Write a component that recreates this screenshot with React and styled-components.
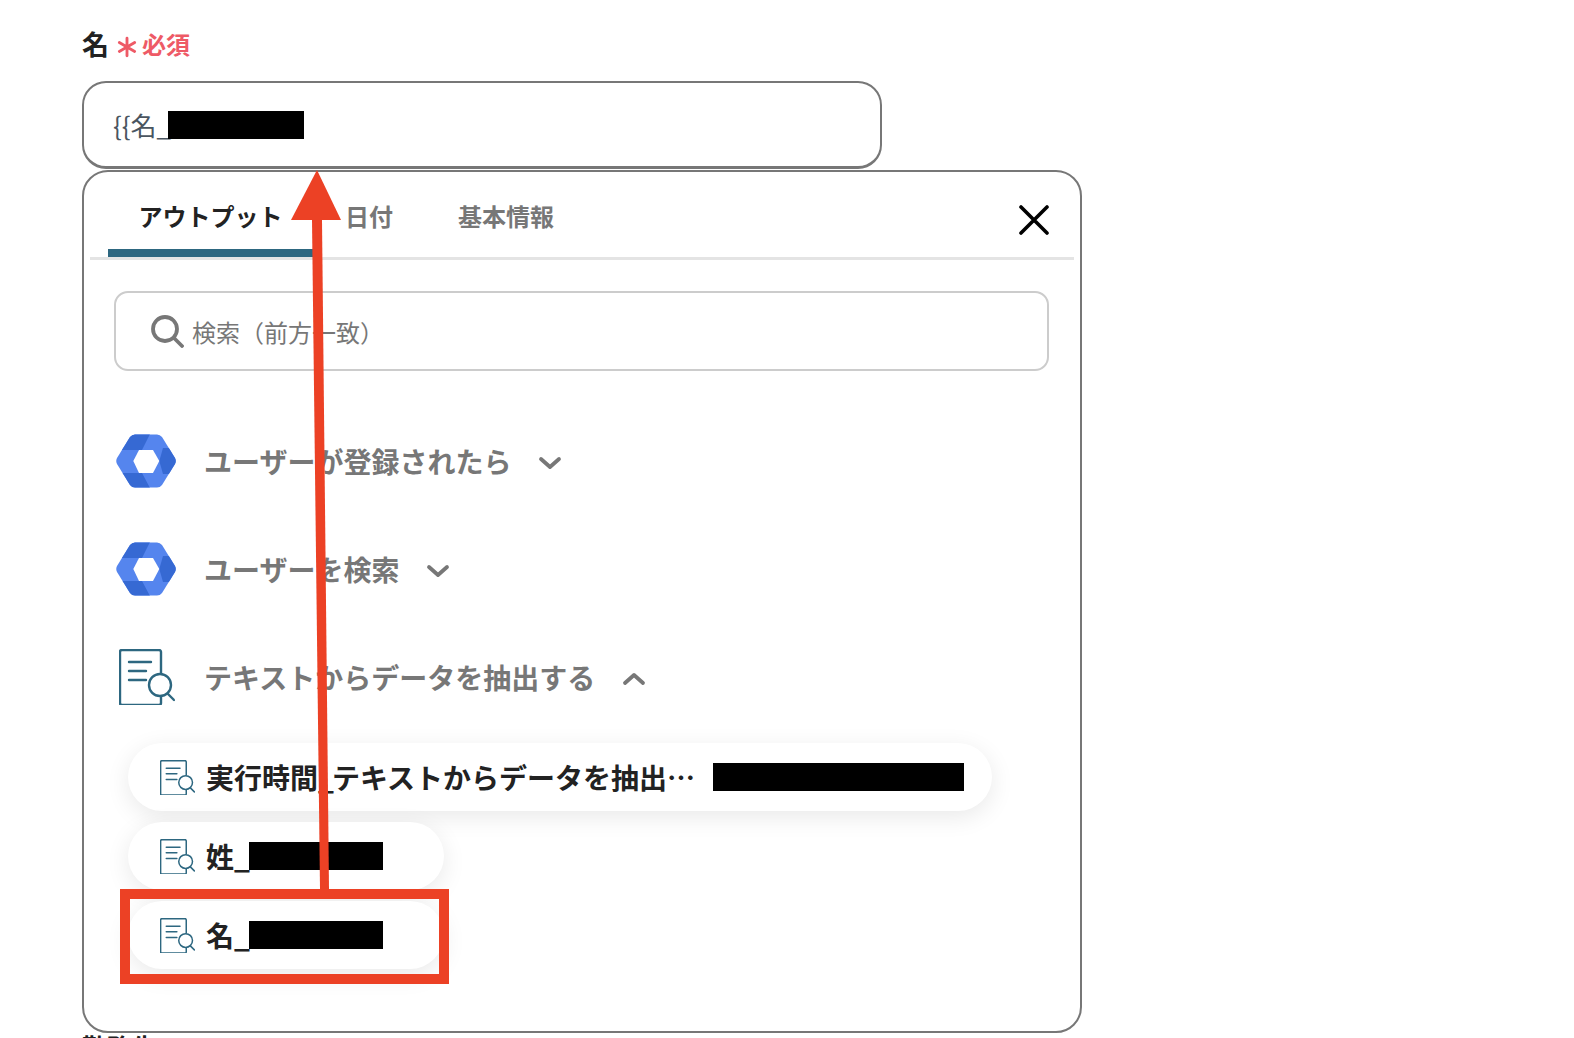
import React from 'react'
import styled, { createGlobalStyle } from 'styled-components'

const colors = {
  ink: '#222222',
  gray: '#777777',
  teal: '#2d6780',
  red: '#ec4125',
  blue: '#5585ee',
  blueDark: '#3669d3',
}

const GlobalStyle = createGlobalStyle`
  html, body {
    margin: 0;
    height: 100%;
    overflow: hidden;
    background: #fff;
  }
  body {
    font-family: "Noto Sans CJK JP", "Noto Sans", sans-serif;
    color: ${colors.ink};
  }
`

const Page = styled.div`
  position: relative;
  width: 1574px;
  height: 1038px;
  padding: 25px 0 0 82px;
  box-sizing: border-box;
  overflow: hidden;
`

const FieldLabel = styled.div`
  display: flex;
  align-items: center;
  height: 38px;
  font-size: 27px;
  font-weight: 700;
  line-height: 38px;
`

const Required = styled.span`
  margin-left: 8px;
  color: #ee5a66;
  font-size: 24px;
  font-weight: 700;
  display: flex;
  align-items: center;
  gap: 5px;
`

const Star = styled.svg`
  width: 20px;
  height: 22px;
  margin-top: 6px;
`

const Input = styled.div`
  width: 800px;
  height: 88px;
  margin-top: 18px;
  padding-left: 29px;
  box-sizing: border-box;
  display: flex;
  align-items: center;
  border: 2px solid ${colors.gray};
  border-bottom-width: 3px;
  border-radius: 24px;
  font-size: 26px;
  color: #4a5560;
`

const Redact = styled.span`
  display: inline-block;
  flex: none;
  width: ${p => p.$w}px;
  height: 28px;
  margin-left: ${p => p.$shift || 0}px;
  background: #000;
`

const Panel = styled.div`
  width: 1000px;
  height: 863px;
  margin-top: 1px;
  box-sizing: border-box;
  padding: 0 6px;
  border: 2px solid ${colors.gray};
  border-radius: 26px;
  background: #fff;
`

const TabBar = styled.div`
  position: relative;
  display: flex;
  height: 88px;
  box-sizing: border-box;
  padding-left: 18px;
  border-bottom: 3px solid #e4e4e4;
`

const Tab = styled.div`
  width: ${p => p.$w}px;
  height: 85px;
  box-sizing: border-box;
  padding-top: 27px;
  text-align: center;
  font-size: 24px;
  line-height: 34px;
  font-weight: 700;
  color: ${p => (p.$active ? colors.ink : colors.gray)};
  border-bottom: ${p => (p.$active ? `8px solid ${colors.teal}` : 'none')};
  border-radius: 8px 8px 0 0;
`

const Close = styled.svg`
  position: absolute;
  top: 33px;
  right: 25px;
  width: 30px;
  height: 30px;
`

const SearchBox = styled.div`
  display: flex;
  align-items: center;
  gap: 8px;
  height: 80px;
  margin: 31px 25px 0 24px;
  padding-left: 34px;
  box-sizing: border-box;
  border: 2px solid #cccccc;
  border-radius: 14px;
  font-size: 24px;
  color: ${colors.gray};
`

const Group = styled.div`
  display: flex;
  align-items: center;
  height: 56px;
  margin-top: ${p => p.$top}px;
  padding-left: 26px;
  font-size: 28px;
  font-weight: 700;
  color: ${colors.gray};
`

const GroupIcon = styled.div`
  flex: none;
  width: 60px;
  margin-right: 28px;
  display: flex;
  justify-content: center;
  padding-left: ${p => p.$inset || 0}px;
  box-sizing: border-box;
`

const Chevron = styled.svg`
  width: 24px;
  height: 24px;
  margin: 4px 0 0 27px;
`

const Rows = styled.div`
  display: flex;
  flex-direction: column;
  gap: 11px;
  margin: 38px 0 0 38px;
`

const Row = styled.div`
  display: flex;
  align-items: center;
  width: ${p => p.$w}px;
  height: 68px;
  box-sizing: border-box;
  padding-left: 32px;
  border-radius: 34px;
  background: #fff;
  box-shadow: 0 6px 24px rgba(0, 0, 0, 0.09);
  font-size: 28px;
  font-weight: 700;
  white-space: nowrap;
`

const RowText = styled.span`
  margin: 0 ${p => p.$gap || 0}px 0 11px;
`

const Underscore = styled.span`
  margin-right: -2px;
`

const Annotation = styled.svg`
  position: absolute;
  top: 0;
  left: 0;
  pointer-events: none;
`

const NextLabel = styled.div`
  margin-top: -6px;
  font-size: 25px;
  font-weight: 700;
  line-height: 38px;
`

const hexOutline =
  'M1 24L14 3Q16 .5 19 .5H41Q44 .5 46 3L59 24Q60.5 27 59 30L46 51Q44 53.5 41 53.5H19Q16 53.5 14 51L1 30Q-.5 27 1 24Z'

const HexIcon = () => (
  <svg width="60" height="54" viewBox="0 0 60 54">
    <clipPath id="hex-outline">
      <path d={hexOutline} />
    </clipPath>
    <g clipPath="url(#hex-outline)">
      <rect width="60" height="54" fill={colors.blue} />
      <polygon points="0,16 26,16 34,0 0,0" fill={colors.blueDark} />
      <polygon points="43.3,27 47,14 62,14 62,40 47,40" fill={colors.blueDark} />
      <polygon points="0,39 26,39 34,54 0,54" fill={colors.blueDark} />
      <polygon points="17.3,27 23,16 37,16 43.3,27 37,39 23,39" fill="#fff" />
    </g>
  </svg>
)

const DocIcon = ({ size }) => (
  <svg width={size} height={size} viewBox="0 0 56 56" fill="none" stroke={colors.teal} strokeWidth="2.4" strokeLinecap="round">
    <path d="M42 24V3a2 2 0 0 0-2-2H3a2 2 0 0 0-2 2v51a2 2 0 0 0 2 2h37a2 2 0 0 0 2-2v-6" />
    <path d="M10 13h22M10 22h17M10 31h17" />
    <circle cx="41" cy="36" r="11" />
    <path d="M49 45l6 6" />
  </svg>
)

const Chev = ({ up }) => (
  <Chevron viewBox="0 0 24 24" fill="none" stroke={colors.gray} strokeWidth="3.8" strokeLinecap="round" strokeLinejoin="round">
    <path d={up ? 'M3 16l9-8 9 8' : 'M3 8l9 8 9-8'} />
  </Chevron>
)

export default function App() {
  return (
    <Page>
      <GlobalStyle />
      <FieldLabel>
        名
        <Required>
          <Star viewBox="0 0 18 20" stroke="#ee5a66" strokeWidth="2.6" strokeLinecap="round">
            <path d="M9 2v16M2 6l14 8M16 6L2 14" />
          </Star>
          必須
        </Required>
      </FieldLabel>
      <Input>
        {'{{名_'}
        <Redact $w={136} $shift={-3} />
      </Input>
      <Panel>
        <TabBar>
          <Tab $active $w={205}>アウトプット</Tab>
          <Tab $w={112}>日付</Tab>
          <Tab $w={162}>基本情報</Tab>
          <Close viewBox="0 0 30 30" fill="none" stroke="#000" strokeWidth="3.6" strokeLinecap="round">
            <path d="M2 2l26 26M28 2L2 28" />
          </Close>
        </TabBar>
        <SearchBox>
          <svg width="34" height="34" viewBox="0 0 34 34" fill="none" stroke={colors.gray} strokeWidth="3.8" strokeLinecap="round">
            <circle cx="15" cy="15" r="12" />
            <path d="M24 24l8 8" />
          </svg>
          検索（前方一致）
        </SearchBox>
        <Group $top={62}>
          <GroupIcon><HexIcon /></GroupIcon>
          ユーザーが登録されたら
          <Chev />
        </Group>
        <Group $top={52}>
          <GroupIcon><HexIcon /></GroupIcon>
          ユーザーを検索
          <Chev />
        </Group>
        <Group $top={52}>
          <GroupIcon $inset={2}><DocIcon size={56} /></GroupIcon>
          テキストからデータを抽出する
          <Chev up />
        </Group>
        <Rows>
          <Row $w={864}>
            <DocIcon size={35} />
            <RowText $gap={18}>実行時間<Underscore>_</Underscore>テキストからデータを抽出…</RowText>
            <Redact $w={251} />
          </Row>
          <Row $w={316}>
            <DocIcon size={35} />
            <RowText>姓_</RowText>
            <Redact $w={134} $shift={-1} />
          </Row>
          <Row $w={316}>
            <DocIcon size={35} />
            <RowText>名_</RowText>
            <Redact $w={134} $shift={-1} />
          </Row>
        </Rows>
      </Panel>
      <NextLabel>勤務先</NextLabel>
      <Annotation width="1574" height="1038" viewBox="0 0 1574 1038">
        <polygon points="317,170 341,220 291,220" fill={colors.red} />
        <polygon points="312,220 322,220 329,889 320,889" fill={colors.red} />
        <rect x="125" y="894" width="319" height="85" fill="none" stroke={colors.red} strokeWidth="10" />
      </Annotation>
    </Page>
  )
}
